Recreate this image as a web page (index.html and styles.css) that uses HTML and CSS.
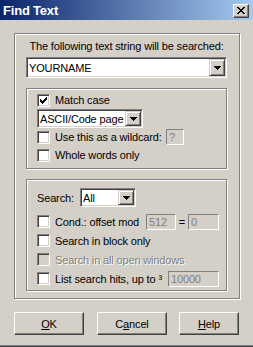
FILE: index.html
```html
<!DOCTYPE html>
<html lang="en">
<head>
  <meta charset="UTF-8">
  <title>Find Text</title>
  <link rel="stylesheet" href="styles.css">
</head>
<body>
  <div class="window">
    <div class="titlebar">
      <span class="title">Find Text</span>
      <span class="close-btn">
        <svg width="8" height="7" viewBox="0 0 8 7" shape-rendering="crispEdges"><path d="M0 0h2v1H0z M6 0h2v1H6z M1 1h2v1H1z M5 1h2v1H5z M2 2h4v1H2z M3 3h2v1H3z M2 4h4v1H2z M1 5h2v1H1z M5 5h2v1H5z M0 6h2v1H0z M6 6h2v1H6z" fill="#000"/></svg>
      </span>
    </div>

    <div class="group outer">
      <div class="caption">The following text string will be searched:</div>
      <div class="combo combo-main">
        <span class="value">YOURNAME</span>
        <span class="drop"><svg width="7" height="4" viewBox="0 0 7 4" shape-rendering="crispEdges"><path d="M0 0h7v1H0z M1 1h5v1H1z M2 2h3v1H2z M3 3h1v1H3z" fill="#000"/></svg></span>
      </div>

      <!-- options -->
      <div class="group inner inner-top">
        <div class="row row-first">
          <span class="check"><svg width="7" height="7" viewBox="0 0 7 7" shape-rendering="crispEdges"><path d="M0 2h1v3H0z M1 3h1v3H1z M2 4h1v3H2z M3 3h1v3H3z M4 2h1v3H4z M5 1h1v3H5z M6 0h1v3H6z" fill="#000"/></svg></span>
          <span>Match case</span>
        </div>
        <div class="row row-combo">
          <div class="combo combo-code">
            <span class="value">ASCII/Code page</span>
            <span class="drop"><svg width="7" height="4" viewBox="0 0 7 4" shape-rendering="crispEdges"><path d="M0 0h7v1H0z M1 1h5v1H1z M2 2h3v1H2z M3 3h1v1H3z" fill="#000"/></svg></span>
          </div>
        </div>
        <div class="row">
          <span class="check"></span>
          <span class="label label-wild">Use this as a wildcard:</span>
          <span class="edit edit-wild">?</span>
        </div>
        <div class="row">
          <span class="check"></span>
          <span>Whole words only</span>
        </div>
      </div>

      <!-- search scope -->
      <div class="group inner inner-bottom">
        <div class="row row-search">
          <span class="label label-search">Search:</span>
          <div class="combo combo-all">
            <span class="value">All</span>
            <span class="drop"><svg width="7" height="4" viewBox="0 0 7 4" shape-rendering="crispEdges"><path d="M0 0h7v1H0z M1 1h5v1H1z M2 2h3v1H2z M3 3h1v1H3z" fill="#000"/></svg></span>
          </div>
        </div>
        <div class="row row-cond">
          <span class="check"></span>
          <span class="label label-cond">Cond.: offset mod</span>
          <span class="edit edit-mod">512</span>
          <span class="equals">=</span>
          <span class="edit edit-eq">0</span>
        </div>
        <div class="row">
          <span class="check"></span>
          <span>Search in block only</span>
        </div>
        <div class="row">
          <span class="check disabled"></span>
          <span class="disabled-text">Search in all open windows</span>
        </div>
        <div class="row">
          <span class="check"></span>
          <span class="label label-list">List search hits, up to ³</span>
          <span class="edit edit-list">10000</span>
        </div>
      </div>
    </div>

    <div class="buttons">
      <span class="btn btn-ok"><u>O</u>K</span>
      <span class="btn btn-cancel">C<u>a</u>ncel</span>
      <span class="btn btn-help"><u>H</u>elp</span>
    </div>
  </div>
</body>
</html>
```

FILE: styles.css
```css
/* classic dialog look */
* {
  box-sizing: border-box;
}

body {
  margin: 0;
  font-family: "Liberation Sans", Arial, sans-serif;
  font-size: 11px;
  letter-spacing: -0.15px;
  color: #000;
  background-color: #d4d0c8;
}

.window {
  width: 253px;
  height: 347px;
  background-color: #d4d0c8;
  border-bottom: 1px solid #404040;
  box-shadow: inset 0 -1px 0 #808080;
  overflow: hidden;
}

.titlebar {
  height: 20px;
  display: flex;
  align-items: center;
  justify-content: space-between;
  padding: 1px 4px 0 3px;
  background: linear-gradient(to right, #0a246a, #a6caf0);
}

.title {
  color: #fff;
  font-weight: bold;
  font-size: 13px;
  letter-spacing: -0.2px;
}

.close-btn {
  width: 16px;
  height: 14px;
  display: flex;
  align-items: center;
  justify-content: center;
  background-color: #d4d0c8;
  border: 1px solid;
  border-color: #fff #404040 #404040 #fff;
  box-shadow: inset -1px -1px 0 #808080;
}

/* etched group boxes */
.group {
  border: 1px solid #808080;
  box-shadow: 1px 1px 0 #fff, inset 1px 1px 0 #fff;
}

.outer {
  margin: 13px 0 0 14px;
  width: 226px;
  padding: 6px 12px 7px 11px;
}

.caption {
  text-align: center;
  line-height: 13px;
}

.inner {
  margin-top: 10px;
  padding-left: 10px;
}

.inner-top {
  padding-top: 3px;
  padding-bottom: 4px;
}

.inner-bottom {
  padding-top: 8px;
  padding-bottom: 2px;
}

.row {
  display: flex;
  align-items: center;
  height: 18px;
  white-space: nowrap;
}

.row-first {
  height: 16px;
}

.row-combo {
  height: 19px;
  margin-top: 1px;
}

.inner-bottom .row {
  height: 19px;
}

.inner-bottom .row-cond {
  margin-top: 5px;
}

/* checkboxes */
.check {
  flex: none;
  width: 13px;
  height: 13px;
  margin-right: 5px;
  display: flex;
  align-items: center;
  justify-content: center;
  background-color: #fff;
  border: 1px solid;
  border-color: #808080 #fff #fff #808080;
  box-shadow: inset 1px 1px 0 #404040, inset -1px -1px 0 #d4d0c8;
}

.check.disabled {
  background-color: #d4d0c8;
}

.disabled-text {
  color: #808080;
  text-shadow: 1px 1px 0 #fff;
}

/* combo boxes */
.combo {
  display: flex;
  padding: 1px;
  white-space: nowrap;
  background-color: #fff;
  border: 1px solid;
  border-color: #808080 #fff #fff #808080;
  box-shadow: inset 1px 1px 0 #404040, inset -1px -1px 0 #d4d0c8;
}

.combo .value {
  flex: 1;
  display: flex;
  align-items: center;
  padding-left: 1px;
}

.drop {
  flex: none;
  width: 16px;
  display: flex;
  align-items: center;
  justify-content: center;
  background-color: #d4d0c8;
  border: 1px solid;
  border-color: #d4d0c8 #404040 #404040 #d4d0c8;
  box-shadow: inset 1px 1px 0 #fff, inset -1px -1px 0 #808080;
}

.combo-main {
  height: 21px;
  margin-top: 4px;
}

.combo-code {
  width: 106px;
  height: 19px;
}

.combo-all {
  width: 56px;
  height: 19px;
}

/* disabled edits */
.edit {
  flex: none;
  height: 16px;
  display: flex;
  align-items: center;
  padding-left: 2px;
  color: #808080;
  background-color: #d4d0c8;
  border: 1px solid;
  border-color: #808080 #fff #fff #808080;
}

.label-wild {
  width: 111px;
}

.edit-wild {
  width: 18px;
}

.label-search {
  width: 43px;
}

.label-cond {
  width: 91px;
}

.edit-mod {
  width: 30px;
}

.equals {
  width: 12px;
  text-align: center;
}

.edit-eq {
  width: 31px;
}

.label-list {
  width: 113px;
}

.edit-list {
  width: 51px;
}

/* bottom buttons */
.buttons {
  display: flex;
  margin-top: 13px;
  padding-left: 14px;
}

.btn {
  height: 23px;
  display: flex;
  align-items: center;
  justify-content: center;
  background-color: #d4d0c8;
  border: 1px solid;
  border-color: #fff #404040 #404040 #fff;
  box-shadow: inset -1px -1px 0 #808080;
}

.btn-ok {
  width: 70px;
}

.btn-cancel {
  width: 70px;
  margin-left: 13px;
}

.btn-help {
  width: 60px;
  margin-left: 12px;
}
```
